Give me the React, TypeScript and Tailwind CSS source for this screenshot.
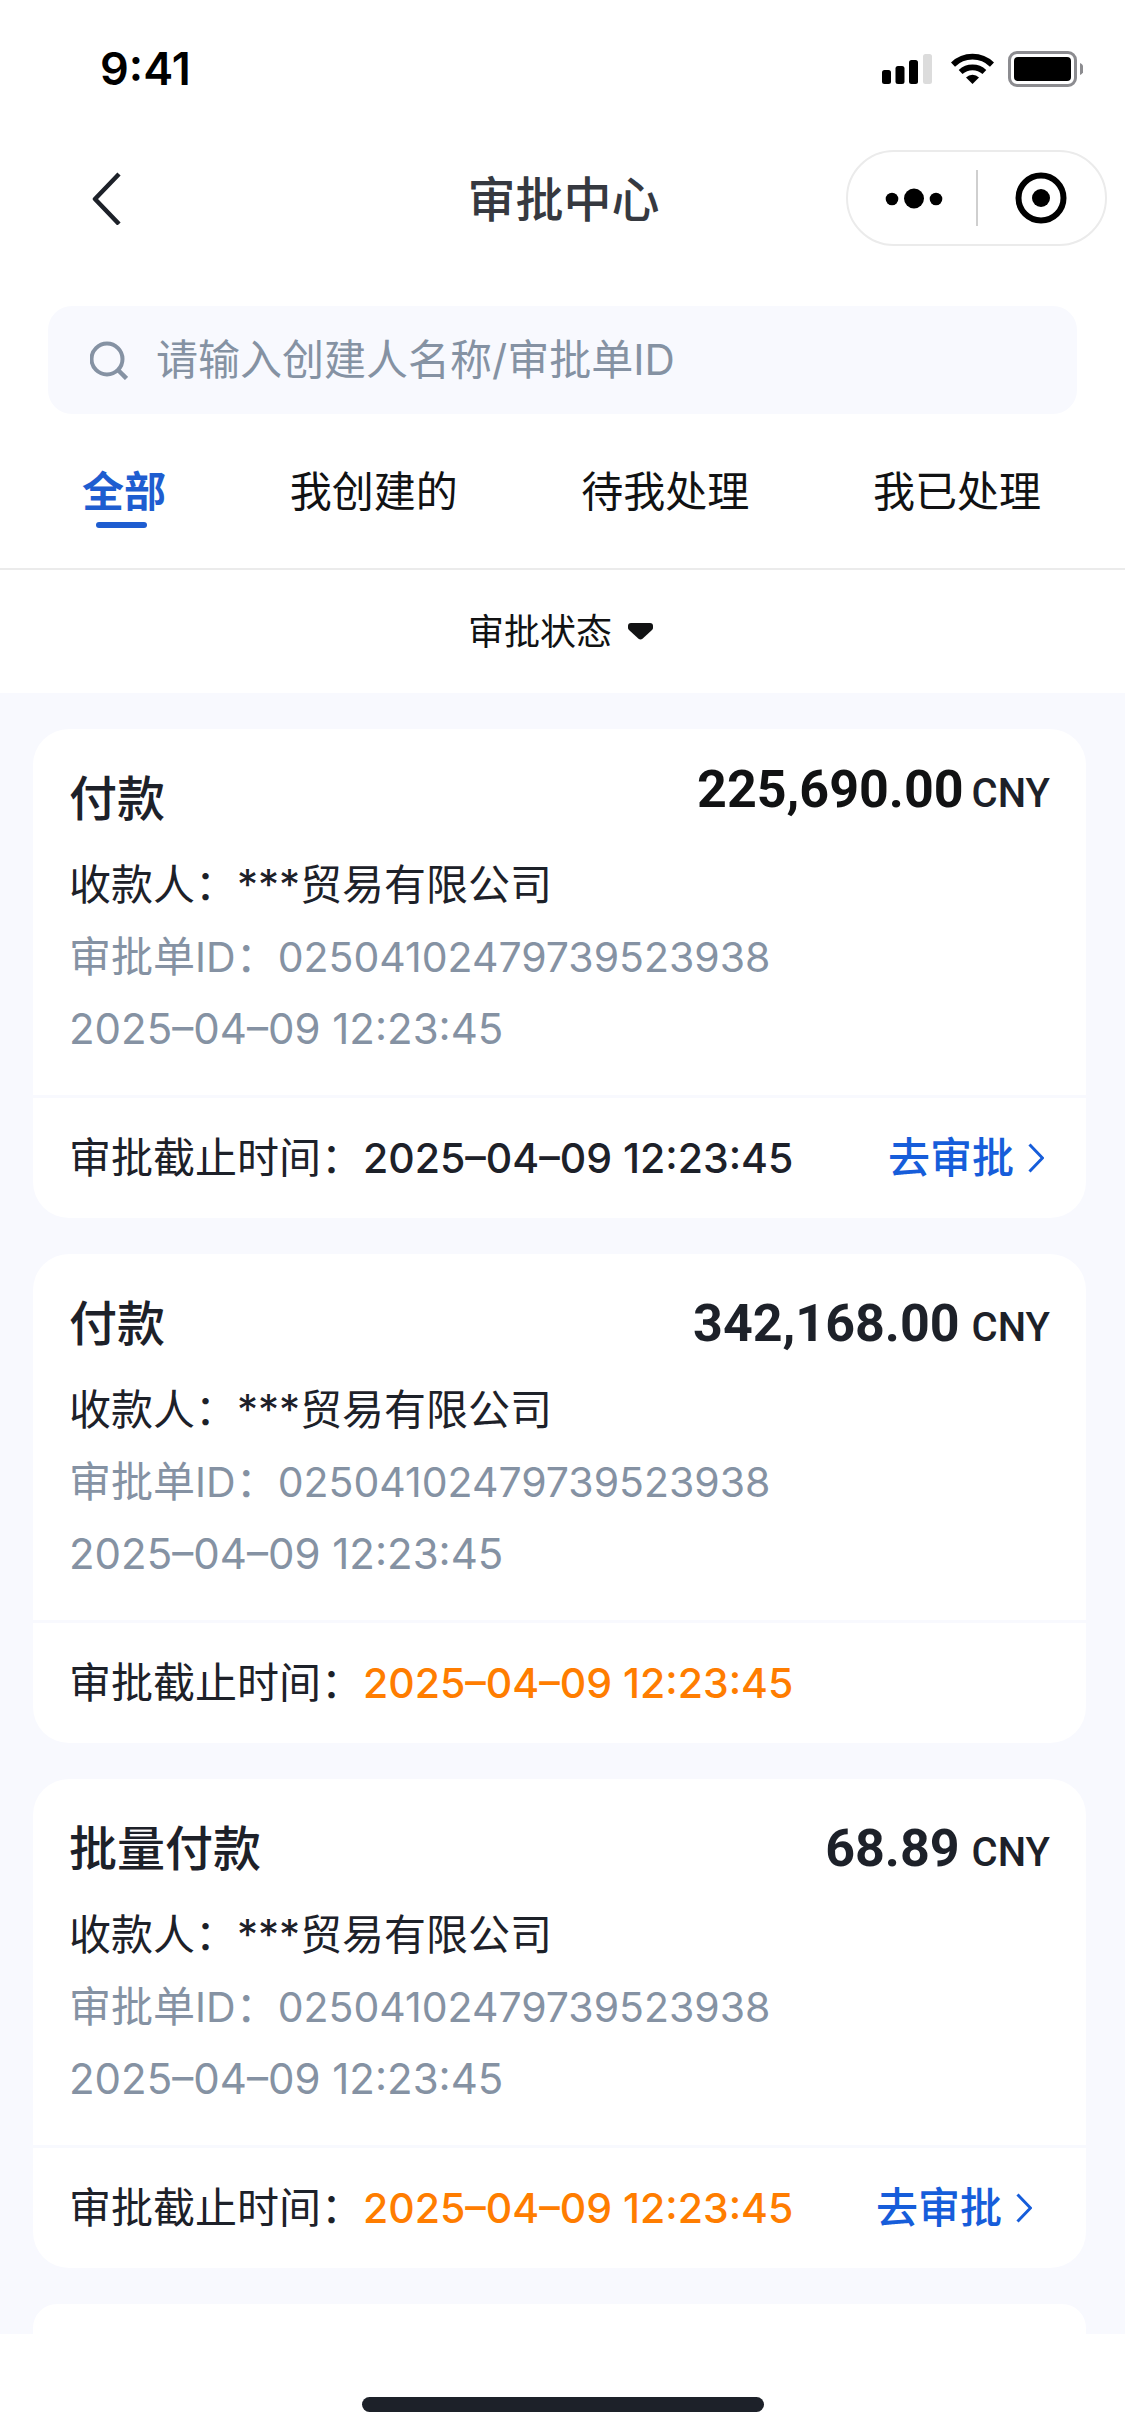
import React from 'react'
import clsx from 'clsx'

interface Approval {
    title: string
    amount: string
    tight?: boolean
    overdue?: boolean
    action?: boolean
    inset?: boolean
}

const tabs = ['全部', '我创建的', '待我处理', '我已处理']

const approvals: Approval[] = [
    { title: '付款', amount: '225,690.00', tight: true, action: true },
    { title: '付款', amount: '342,168.00', overdue: true },
    { title: '批量付款', amount: '68.89', overdue: true, action: true, inset: true },
]

const StatusBar = () => (
    <div className="flex h-[138px] items-center justify-between pr-[42px] pl-[100px]">
        <span className="text-[45px] leading-[54px] font-semibold text-black">9:41</span>
        <div className="flex items-center">
            <svg width="50" height="36" viewBox="0 0 50 36" aria-hidden="true">
                <rect x="0" y="19" width="9" height="14" rx="2.5" />
                <rect x="13.5" y="15" width="9" height="18" rx="2.5" />
                <rect x="27" y="9" width="9" height="24" rx="2.5" />
                <rect x="41" y="3" width="9" height="30" rx="2.5" fill="#dcdcdc" />
            </svg>
            <svg className="ml-[19px]" width="43" height="36" viewBox="0 0 43 36" aria-hidden="true">
                <path d="M21.5 33 L15 26.4 A9.4 9.4 0 0 1 28 26.4 Z" />
                <path d="M9.6 21 A17.6 17.6 0 0 1 33.4 21" fill="none" stroke="#000" strokeWidth="5.6" />
                <path d="M2 13.6 A28 28 0 0 1 41 13.6" fill="none" stroke="#000" strokeWidth="5.8" />
            </svg>
            <svg className="ml-[14px]" width="75" height="36" viewBox="0 0 75 36" aria-hidden="true">
                <rect x="1.5" y="1.5" width="66" height="33" rx="7.5" fill="none" stroke="#8c8c90" strokeWidth="3" />
                <rect x="6" y="6" width="57" height="24" rx="4" />
                <path d="M72 12 A6.6 6.6 0 0 1 72 24 Z" fill="#8c8c90" />
            </svg>
        </div>
    </div>
)

const Navbar = () => (
    <header className="grid h-[120px] grid-cols-3 items-center pr-[18px] pl-[90px]">
        <button type="button" aria-label="返回" className="justify-self-start">
            <svg width="33" height="54" viewBox="0 0 33 54" fill="none" stroke="#1d2129" strokeWidth="4.5" strokeLinejoin="round">
                <path d="M29 3 L5 28 L29 53" />
            </svg>
        </button>
        <h1 className="justify-self-center pt-1 pr-[70px] text-[48px] leading-[66px] font-medium whitespace-nowrap text-[#363940]">审批中心</h1>
        <div className="flex h-24 w-[261px] items-center justify-self-end rounded-full border-2 border-[#ebebeb]">
            <button type="button" aria-label="更多" className="flex flex-1 justify-center">
                <svg width="62" height="24" viewBox="0 0 62 24">
                    <circle cx="11" cy="13" r="6.3" />
                    <circle cx="33" cy="12.5" r="10" />
                    <circle cx="55" cy="13" r="6.3" />
                </svg>
            </button>
            <span className="h-14 w-[2px] bg-[#cfcfcf]" />
            <button type="button" aria-label="关闭" className="flex flex-1 justify-center">
                <svg width="52" height="52" viewBox="0 0 52 52">
                    <circle cx="26" cy="26" r="22.5" fill="none" stroke="#000" strokeWidth="6" />
                    <circle cx="26" cy="26" r="9" />
                </svg>
            </button>
        </div>
    </header>
)

const SearchBox = () => (
    <label className="mx-12 mt-12 flex h-[108px] items-center gap-7 rounded-3xl bg-[#f8f9fe] px-[42px]">
        <svg className="shrink-0" width="38" height="39" viewBox="0 0 38 39" fill="none" stroke="#8592a3" strokeWidth="4">
            <circle cx="17" cy="18" r="15.5" />
            <path d="M28 29 L36.5 37.5" strokeWidth="4.5" />
        </svg>
        <input
            type="search"
            aria-label="搜索"
            placeholder="请输入创建人名称/审批单ID"
            className="min-w-0 flex-1 bg-transparent text-[42px] leading-[60px] outline-none placeholder:text-[#8592a3]"
        />
    </label>
)

const Tabs = () => (
    <nav className="flex justify-between border-b-2 border-[#ebebeb] pt-12 pr-[84px] pb-[46px] pl-[82px]">
        {tabs.map((tab, i) => (
            <button
                key={tab}
                type="button"
                className={clsx('relative text-[42px] leading-[60px]', i === 0 ? 'font-bold text-[#1e5dd0]' : 'text-[#111213]')}
            >
                {tab}
                {i === 0 && <span className="absolute -bottom-1.5 left-[14px] h-1.5 w-[51px] rounded-full bg-[#1e5dd0]" />}
            </button>
        ))}
    </nav>
)

const ApprovalCard = ({ title, amount, tight, overdue, action, inset }: Approval) => (
    <article className="rounded-[36px] bg-white">
        <div className="px-9 pt-9 pb-[30px]">
            <div className="flex h-[66px] items-start justify-between">
                <h2 className="text-[48px] leading-[68px] font-medium">{title}</h2>
                <p className={clsx('flex items-baseline font-[Roboto,sans-serif]', tight ? 'gap-2 leading-[50px]' : 'gap-3 leading-[68px]')}>
                    <span className={clsx('text-[52px] font-bold', tight && 'text-[#111213]')}>{amount}</span>
                    <span className="text-[40px] font-medium">CNY</span>
                </p>
            </div>
            <div className="mt-[18px] text-[42px] leading-[72px]">
                <p>收款人：***贸易有限公司</p>
                <p className="text-[#8592a3]">
                    审批单<span className="text-[41px]">ID</span>：<span className="text-[41px]">02504102479739523938</span>
                </p>
                <p className="text-[#8592a3]">2025–04–09 12:23:45</p>
            </div>
        </div>
        <div
            className={clsx(
                'flex h-[123px] items-center justify-between border-t-[3px] border-[#f8f9fe] pl-9 text-[42px] leading-[60px]',
                inset ? 'pr-[54px]' : 'pr-[42px]',
            )}
        >
            <p>
                审批截止时间：
                <span className={clsx('text-[41px] font-medium', overdue && 'text-[#ff7d00]')}>2025–04–09 12:23:45</span>
            </p>
            {action && (
                <a href="#approve" className="flex items-center gap-[14px] font-medium text-[#165dda]">
                    去审批
                    <svg width="16" height="30" viewBox="0 0 16 30" fill="none" stroke="#165dda" strokeWidth="3">
                        <path d="M1.5 1.5 L14.5 15 L1.5 28.5" />
                    </svg>
                </a>
            )}
        </div>
    </article>
)

const App = () => {
    return (
        <div className="flex min-h-screen flex-col bg-white font-[Inter,'Noto_Sans_CJK_SC',sans-serif] text-[#1d2129]">
            <StatusBar />
            <Navbar />
            <SearchBox />
            <Tabs />
            <div className="flex h-[123px] items-center justify-center pr-1">
                <button type="button" className="flex items-center gap-4 text-[36px] leading-[54px] text-[#111213]">
                    审批状态
                    <svg width="25" height="17" viewBox="0 0 25 17" fill="#111213">
                        <path d="M3 0 H22 Q25 0 25 3 V5 Q25 6 24 7 L14.5 15.8 Q12.5 17.4 10.5 15.8 L1 7 Q0 6 0 5 V3 Q0 0 3 0 Z" />
                    </svg>
                </button>
            </div>
            {/* Approval list */}
            <main className="flex flex-1 flex-col gap-9 bg-[#f8f9fe] pt-9 pr-[39px] pl-[33px]">
                {approvals.map((item) => (
                    <ApprovalCard key={item.amount} {...item} />
                ))}
                <div className="flex-1 rounded-t-3xl bg-white" />
            </main>
            {/* Home indicator */}
            <footer className="flex h-[102px] items-end justify-center pb-6">
                <span className="h-[15px] w-[402px] rounded-full bg-[#1d2129]" />
            </footer>
        </div>
    )
}

export default App
